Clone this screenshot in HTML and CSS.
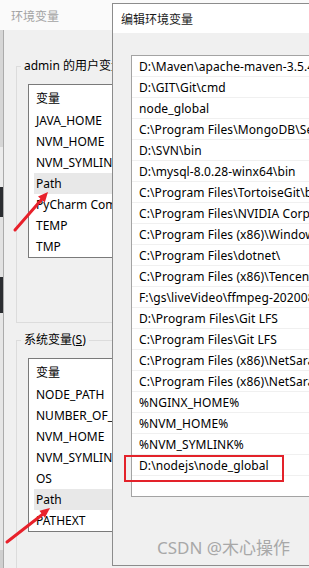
FILE: index.html
```html
<!DOCTYPE html>
<html lang="zh-CN">
<head>
<meta charset="utf-8">
<title>编辑环境变量</title>
<link rel="stylesheet" href="styles.css">
</head>
<body>
<div class="desktop">
  <div class="strip"></div>
  <div class="win-back">
    <div class="titlebar">环境变量</div>
    <div class="wbody">
      <fieldset class="group first">
        <legend>admin 的用户变量(<u>U</u>)</legend>
        <div class="lv">
          <div class="lv-head">变量</div>
          <div class="lv-row">JAVA_HOME</div>
          <div class="lv-row">NVM_HOME</div>
          <div class="lv-row">NVM_SYMLINK</div>
          <div class="lv-row sel">Path</div>
          <div class="lv-row">PyCharm Community Edition</div>
          <div class="lv-row">TEMP</div>
          <div class="lv-row">TMP</div>
        </div>
      </fieldset>
      <fieldset class="group second">
        <legend>系统变量(<u>S</u>)</legend>
        <div class="lv">
          <div class="lv-head">变量</div>
          <div class="lv-row">NODE_PATH</div>
          <div class="lv-row">NUMBER_OF_PROCESSORS</div>
          <div class="lv-row">NVM_HOME</div>
          <div class="lv-row">NVM_SYMLINK</div>
          <div class="lv-row">OS</div>
          <div class="lv-row sel">Path</div>
          <div class="lv-row">PATHEXT</div>
        </div>
      </fieldset>
    </div>
  </div>

  <div class="win-front">
    <div class="titlebar">编辑环境变量</div>
    <div class="wbody">
      <div class="plist">
        <div class="prow">D:\Maven\apache-maven-3.5.4\bin</div>
        <div class="prow">D:\GIT\Git\cmd</div>
        <div class="prow">node_global</div>
        <div class="prow">C:\Program Files\MongoDB\Server\4.0\bin</div>
        <div class="prow">D:\SVN\bin</div>
        <div class="prow">D:\mysql-8.0.28-winx64\bin</div>
        <div class="prow">C:\Program Files\TortoiseGit\bin</div>
        <div class="prow">C:\Program Files\NVIDIA Corporation\NVIDIA NvDLISR</div>
        <div class="prow">C:\Program Files (x86)\Windows Kits\10\</div>
        <div class="prow">C:\Program Files\dotnet\</div>
        <div class="prow">C:\Program Files (x86)\Tencent\QQ\</div>
        <div class="prow">F:\gs\liveVideo\ffmpeg-20200831\bin</div>
        <div class="prow">D:\Program Files\Git LFS</div>
        <div class="prow">C:\Program Files\Git LFS</div>
        <div class="prow">C:\Program Files (x86)\NetSarang\Xshell 7\</div>
        <div class="prow">C:\Program Files (x86)\NetSarang\Xftp 7\</div>
        <div class="prow">%NGINX_HOME%</div>
        <div class="prow">%NVM_HOME%</div>
        <div class="prow">%NVM_SYMLINK%</div>
        <div class="prow">D:\nodejs\node_global</div>
      </div>
    </div>
  </div>

  <div class="redbox"></div>
  <div class="watermark">CSDN @木心操作</div>

  <svg class="arrows" width="309" height="568" viewBox="0 0 309 568" aria-hidden="true">
    <line x1="15" y1="230" x2="42" y2="199" stroke="#e8212b" stroke-width="3" stroke-linecap="round"/>
    <polygon points="48,192 44.8,202.5 38,196.6" fill="#e8212b"/>
    <line x1="7" y1="542" x2="43" y2="514" stroke="#e8212b" stroke-width="3" stroke-linecap="round"/>
    <polygon points="50,508 44.9,517.7 39.4,510.7" fill="#e8212b"/>
  </svg>
</div>
</body>
</html>
```

FILE: styles.css
```css
html, body {
  margin: 0;
  padding: 0;
}
body {
  width: 309px;
  height: 568px;
  overflow: hidden;
  font-family: "Noto Sans", "Noto Sans CJK SC", sans-serif;
  font-size: 12px;
  color: #000;
  background: #e6e6e6;
}
.desktop {
  position: relative;
  display: flex;
  width: 309px;
  height: 568px;
  overflow: hidden;
}
.strip {
  flex: none;
  width: 3px;
  background: linear-gradient(to bottom,
    #fafafa 0, #fafafa 30px,
    #d6d6d6 30px, #d6d6d6 147px,
    #ececec 147px, #ececec 187px,
    #2b2d31 187px, #2b2d31 217px,
    #e2e2e2 217px, #e2e2e2 277px,
    #2b2d31 277px, #2b2d31 313px,
    #e6e6e6 313px, #e6e6e6 550px,
    #cfcfcf 550px);
}
.win-back {
  flex: none;
  width: 420px;
  display: flex;
  flex-direction: column;
}
.win-back .titlebar {
  height: 30px;
  flex: none;
  background: #fafafa;
  color: #a3a3a3;
  display: flex;
  align-items: center;
  padding-left: 8px;
  font-family: "Noto Sans CJK SC", sans-serif;
}
.win-back .wbody {
  flex: 1;
  background: #f0f0f0;
  border-left: 1px solid #ababab;
  padding: 28px 0 0 12px;
}
.group {
  margin: 0;
  padding: 0 0 64px 0;
  border: 1px solid #dcdcdc;
  width: 380px;
}
.group.second {
  margin-top: 9px;
}
.group legend {
  margin-left: 4px;
  padding: 0 3px;
  line-height: 16px;
  height: 16px;
  white-space: nowrap;
  font-family: "Noto Sans", "Noto Sans CJK SC", sans-serif;
}
.lv {
  margin: 10px 0 0 11px;
  width: 330px;
  background: #fff;
  border: 1px solid #7a7a7a;
}
.lv-head {
  height: 25px;
  line-height: 25px;
  padding-left: 7px;
  font-family: "Noto Sans CJK SC", sans-serif;
}
.lv-row {
  height: 21px;
  line-height: 21px;
  margin-left: 5px;
  padding-left: 2px;
  white-space: nowrap;
}
.lv-row.sel {
  background: #e8e8e8;
}
.win-front {
  position: absolute;
  left: 112px;
  top: 3px;
  width: 240px;
  height: 563px;
  box-sizing: border-box;
  border: 1px solid #8c8c8c;
  background: #f0f0f0;
  display: flex;
  flex-direction: column;
  overflow: hidden;
}
.win-front .titlebar {
  height: 29px;
  flex: none;
  background: #fff;
  color: #1a1a1a;
  display: flex;
  align-items: center;
  padding-left: 8px;
  font-family: "Noto Sans CJK SC", sans-serif;
}
.win-front .wbody {
  flex: 1;
  padding: 22px 0 0 18px;
}
.plist {
  width: 260px;
  height: 442px;
  box-sizing: border-box;
  border: 1px solid #a3a3a3;
  background: #fff;
}
.prow {
  height: 21px;
  box-sizing: border-box;
  border-bottom: 1px solid #f0f0f0;
  padding: 2px 0 0 7px;
  line-height: 18px;
  letter-spacing: 0.1px;
  white-space: nowrap;
}
.redbox {
  position: absolute;
  left: 124px;
  top: 455px;
  width: 160px;
  height: 27px;
  box-sizing: border-box;
  border: 2px solid #e3222a;
}
.watermark {
  position: absolute;
  left: 157px;
  top: 537px;
  font-size: 17px;
  line-height: 22px;
  color: #a8a8a8;
  white-space: nowrap;
  font-family: "Noto Sans", "Noto Sans CJK SC", sans-serif;
}
.arrows {
  position: absolute;
  left: 0;
  top: 0;
  pointer-events: none;
}
```
